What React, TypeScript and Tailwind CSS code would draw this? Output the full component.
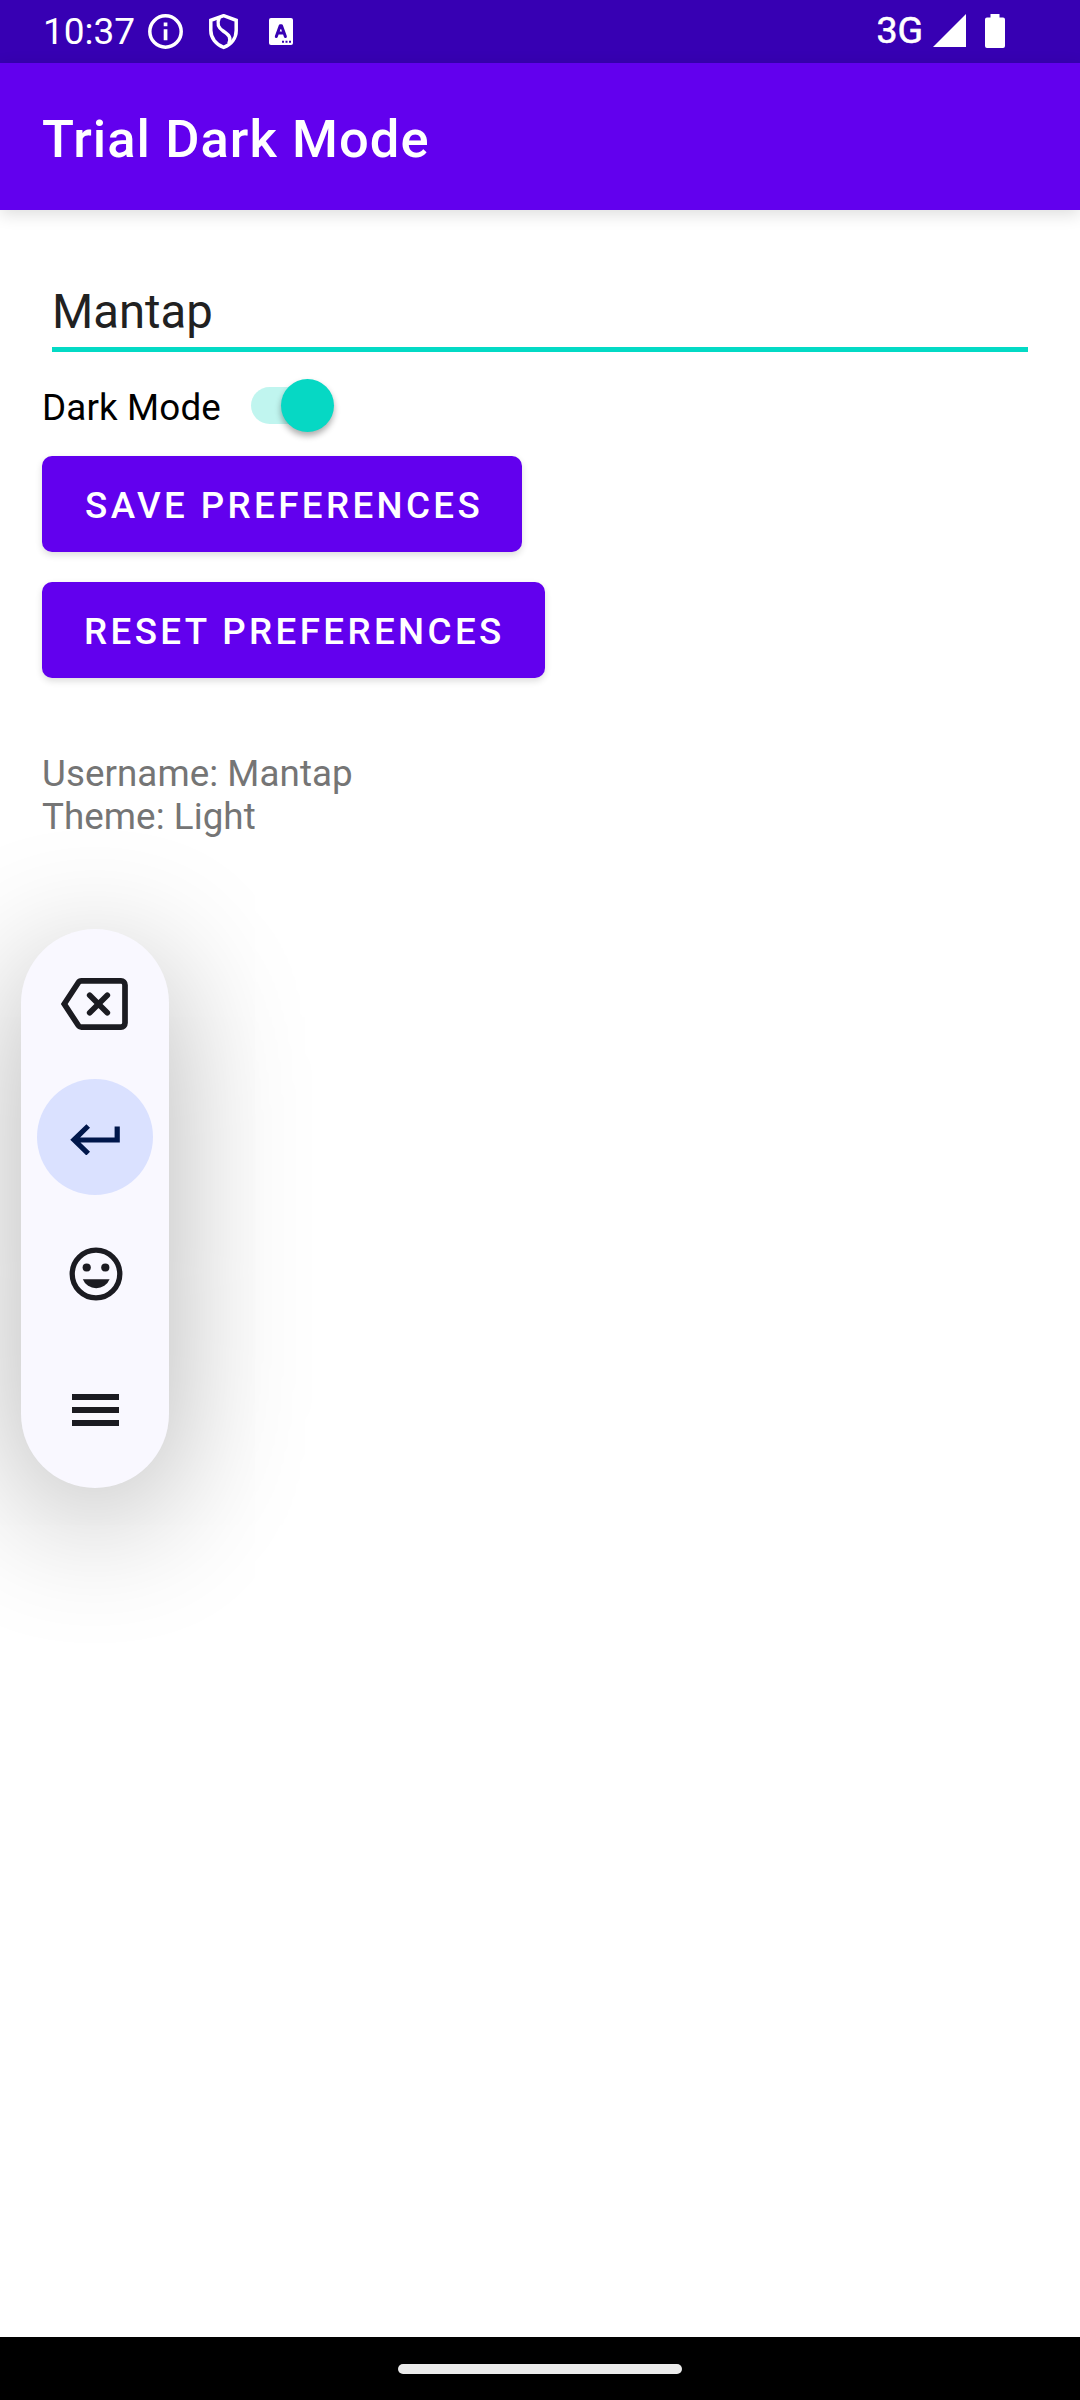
import React from "react";

function StatusBar() {
  return (
    <div className="flex h-[63px] shrink-0 items-start bg-[#3700b3] text-white">
      <span className="ml-[43px] mt-[8px] w-[105px] whitespace-nowrap text-[37px] leading-[47px]">10:37</span>
      <svg className="mt-[14px] h-[35px] w-[35px]" viewBox="0 0 35 35" fill="none">
        <circle cx="17.5" cy="17.5" r="15.7" stroke="#fff" strokeWidth="3.5" />
        <path d="M15.7 8.500h3.700v3.700h-3.700zM15.700 15.200h3.700v11h-3.700z" fill="#fff" />
      </svg>
      <svg className="ml-[26px] mt-[14px] h-[36px] w-[30px]" viewBox="0 0 30 36" fill="none" stroke="#fff" strokeWidth="3.5">
        <path d="M14.7 1.7 1.8 6.3v10.2c0 7.6 5.2 14 12.9 16.9 7.700-2.900 12.500-9.300 12.500-16.900V6.300z" />
        <path d="M10.300 3.500C7.200 10.500 9.500 14 14.500 17.300C20 21 22.500 23.300 19.800 29.800" />
      </svg>
      <svg className="ml-[30px] mt-[18px] h-[27px] w-[24px]" viewBox="0 0 24 27">
        <rect width="24" height="27" rx="2" fill="#fff" />
        <path d="M7.300 18.500 11.200 7.800h1.300l3.900 10.700M8.700 15h6.200" fill="none" stroke="#3700b3" strokeWidth="3" strokeLinejoin="round" strokeLinecap="round" />
        <path d="M13 22.800h2v2h-2zM16.500 22.800h2v2h-2zM20 22.800h2v2h-2z" fill="#3700b3" />
      </svg>
      <span className="ml-auto mt-[7px] whitespace-nowrap text-[37.5px] leading-[47px] [-webkit-text-stroke:0.6px_white]">3G</span>
      <svg className="ml-[10px] mt-[14px] h-[33px] w-[33px]" viewBox="0 0 33 33">
        <path d="M33 0v33H0z" fill="#fff" />
      </svg>
      <svg className="ml-[19px] mr-[75px] mt-[14px] h-[34px] w-[20px]" viewBox="0 0 20 34">
        <path d="M5.500 0h9v3.500H18a2 2 0 0 1 2 2V32a2 2 0 0 1-2 2H2a2 2 0 0 1-2-2V5.500a2 2 0 0 1 2-2h3.500z" fill="#fff" />
      </svg>
    </div>
  );
}

function PrefButton({ label, className }: { label: string; className: string }) {
  return (
    <button
      className={
        "flex h-[96px] items-center whitespace-nowrap rounded-[10px] bg-[#6200ee] pt-[3px] text-[36.75px] font-medium leading-[48px] tracking-[3.38px] text-white shadow-[0_3px_7px_rgba(0,0,0,0.14)] " +
        className
      }
    >
      {label}
    </button>
  );
}

function KeyboardPill() {
  return (
    <div className="absolute left-[21px] top-[928.5px] flex h-[559px] w-[148px] flex-col items-center rounded-[74px] bg-[#f9f8ff] shadow-[0_28px_136px_rgba(0,0,0,0.3)]">
      <svg className="-ml-[2px] mt-[49.5px] h-[52px] w-[67px]" viewBox="0 0 67 52" fill="none" stroke="#1b1b21" strokeWidth="5.700">
        <path d="M20.500 2.900H60a4 4 0 0 1 4 4v38.200a4 4 0 0 1-4 4H20.500a4 4 0 0 1-3.300-1.800L3.300 26 17.200 4.700a4 4 0 0 1 3.300-1.800z" />
        <path d="M28.700 17.200 46.300 34.800M46.300 17.200 28.700 34.800" strokeLinecap="round" />
      </svg>
      <div className="mt-[49px] flex h-[116px] w-[116px] items-center justify-center rounded-full bg-[#dae1ff]">
        <svg className="-ml-[1px] mt-[5px] h-[31px] w-[50px]" viewBox="0 0 50 31" fill="none" stroke="#00174b" strokeWidth="5.200">
          <path d="M47.200 2.500V16H4M18.200 2 4 15.800 18.200 29.600" />
        </svg>
      </div>
      <svg className="ml-[1px] mt-[51.500px] h-[54px] w-[54px]" viewBox="0 0 54 54">
        <circle cx="27" cy="27" r="23.800" fill="none" stroke="#1b1b21" strokeWidth="5.300" />
        <circle cx="17.700" cy="20.500" r="4.100" fill="#1b1b21" />
        <circle cx="36.300" cy="20.500" r="4.100" fill="#1b1b21" />
        <path d="M13.800 32.200h26.800a14.400 14.400 0 0 1-26.800 0z" fill="#1b1b21" />
      </svg>
      <div className="mt-[93px] flex w-[47px] flex-col gap-[7px]">
        <div className="h-[6px] bg-[#1b1b21]" />
        <div className="h-[6px] bg-[#1b1b21]" />
        <div className="h-[6px] bg-[#1b1b21]" />
      </div>
    </div>
  );
}

export default function App() {
  return (
    <div className="relative flex h-[2400px] w-[1080px] flex-col overflow-hidden bg-white font-['Roboto',sans-serif]">
      <StatusBar />
      <header className="flex h-[147px] shrink-0 items-center bg-[#6200ee] pl-[42px] pt-[4px] shadow-[0_4px_16px_rgba(0,0,0,0.14)]">
        <h1 className="whitespace-nowrap text-[52.5px] font-medium leading-[64px] tracking-[1.05px] text-white">Trial Dark Mode</h1>
      </header>
      <main className="flex flex-1 flex-col items-start px-[42px]">
        <div className="ml-[10px] mt-[72px] h-[70px] w-[976px] border-b-[5px] border-[#03dac5] text-[47.25px] leading-[60px] text-[#212121]">
          Mantap
        </div>
        <div className="mt-[27px] flex h-[53px] items-center">
          <span className="mt-[4px] w-[209px] whitespace-nowrap text-[36.75px] leading-[44px] tracking-[0.15px] text-black">Dark Mode</span>
          <div className="flex h-[37px] w-[83px] items-center justify-end rounded-full bg-[linear-gradient(90deg,#c0f5ef_60px,transparent_60px)]">
            <div className="h-[53px] w-[53px] shrink-0 rounded-full bg-[#06d8c4] shadow-[0_4px_6px_rgba(0,0,0,0.32)]" />
          </div>
        </div>
        <PrefButton label="SAVE PREFERENCES" className="mt-[24px] w-[480px] pl-[43px]" />
        <PrefButton label="RESET PREFERENCES" className="mt-[30px] w-[503px] pl-[42px]" />
        <div className="mt-[74px] text-[36.75px] leading-[43px] tracking-[0.06px] text-[#757575]">
          <p>Username: Mantap</p>
          <p>Theme: Light</p>
        </div>
      </main>
      <KeyboardPill />
      <footer className="flex h-[63px] shrink-0 justify-center bg-black pt-[27px]">
        <div className="h-[10px] w-[284px] rounded-full bg-[#ebebeb]" />
      </footer>
    </div>
  );
}
